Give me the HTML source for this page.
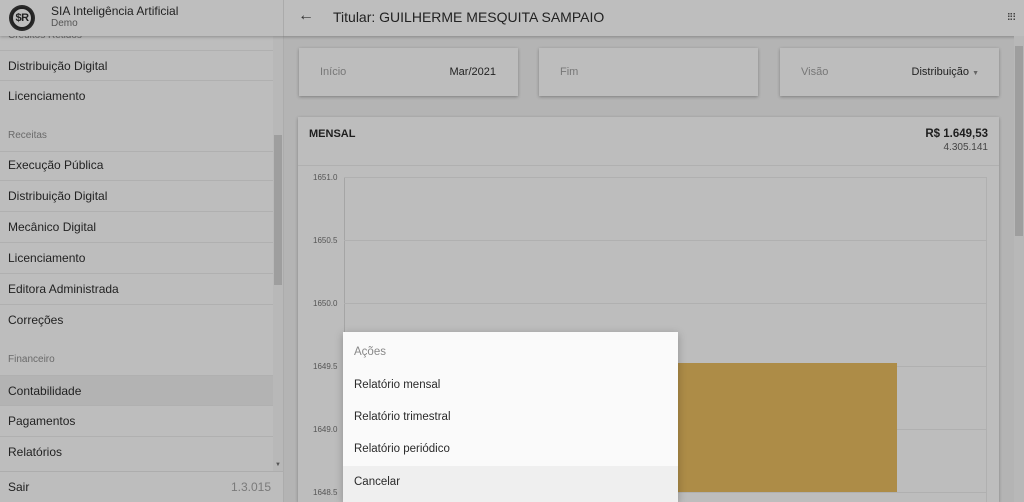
<!DOCTYPE html>
<html style="overflow:hidden;width:1024px;height:502px"><head><meta charset="utf-8"><style>
*{box-sizing:border-box;margin:0;padding:0}
body{width:1024px;height:502px;overflow:hidden;background:#b4b4b4;font-family:"Liberation Sans",sans-serif;position:relative;color:#1e1e1e}
.abs{position:absolute}
.sb{left:0;top:0;width:284px;height:502px;background:#bdbdbd;border-right:1px solid #acacac}
.item{position:absolute;left:0;width:273px;font-size:12px;color:#222;padding-left:8px;border-bottom:1px solid #b0b0b0;height:31px;line-height:30px}
.lbl{position:absolute;left:8px;font-size:10px;color:#6a6a6a}
.hdr{left:0;top:0;width:1024px;height:36px;background:#bebebe;box-shadow:0 1px 3px rgba(0,0,0,.25)}
.card{background:#bdbdbd;box-shadow:0 1px 3px rgba(0,0,0,.3);position:absolute}
.yl{position:absolute;left:313px;font-size:8px;color:#555}
.gl{position:absolute;left:344px;width:643px;height:1px;background:#b0b0b0}
.mi{position:absolute;left:343px;width:335px;height:32px;line-height:32px;padding-left:11px;font-size:11.5px;color:#2a2a2a}
</style></head><body>
<div class="abs sb">
  <div class="lbl" style="top:30px;">Créditos Retidos</div>
  <div class="item" style="top:19px;height:32px"></div>
  <div class="item" style="top:50px;border-top:1px solid #b0b0b0">Distribuição Digital</div>
  <div class="item" style="top:81px;border-bottom:none">Licenciamento</div>
  <div class="lbl" style="top:130px;">Receitas</div>
  <div class="item" style="top:151px;border-top:1px solid #b0b0b0;height:30px;padding:0"></div>
  <div class="item" style="top:150px">Execução Pública</div>
  <div class="item" style="top:181px">Distribuição Digital</div>
  <div class="item" style="top:212px">Mecânico Digital</div>
  <div class="item" style="top:243px">Licenciamento</div>
  <div class="item" style="top:274px">Editora Administrada</div>
  <div class="item" style="top:305px;border-bottom:none">Correções</div>
  <div class="lbl" style="top:354px;">Financeiro</div>
  <div class="item" style="top:375px;background:#b3b3b3;border-top:1px solid #b0b0b0">Contabilidade</div>
  <div class="item" style="top:406px">Pagamentos</div>
  <div class="item" style="top:437px;border-bottom:none">Relatórios</div>
  <div class="abs" style="left:273px;top:36px;width:10px;height:435px;background:#b8b8b8"></div>
  <div class="abs" style="left:274px;top:135px;width:8px;height:150px;background:#9e9e9e"></div>
  <div class="abs" style="left:275px;top:462px;font-size:6px;color:#555">▼</div>
  <div class="abs" style="left:0;top:471px;width:284px;height:31px;border-top:1px solid #adadad;font-size:12px;line-height:30px;padding:0 13px 0 8px;display:flex;justify-content:space-between"><span>Sair</span><span style="color:#7a7a7a">1.3.015</span></div>
</div>
<div class="abs hdr">
  <div class="abs" style="left:0;top:0;width:284px;height:36px;border-right:1px solid #ababab"></div>
  <div class="abs" style="left:9px;top:5px;width:26px;height:26px;border-radius:50%;background:#2a2a2a;"></div>
  <div class="abs" style="left:11px;top:7px;width:22px;height:22px;border-radius:50%;background:#bebebe;border:2px solid #222"></div>
  <div class="abs" style="left:9px;top:5px;width:26px;height:26px;font-weight:bold;font-size:11px;line-height:26px;text-align:center;color:#222;letter-spacing:-0.5px">$R</div>
  <div class="abs" style="left:51px;top:4px;font-size:12px;color:#222">SIA Inteligência Artificial</div>
  <div class="abs" style="left:51px;top:18px;font-size:10px;color:#555">Demo</div>
  <div class="abs" style="left:298px;top:7px;font-size:16px;color:#333">←</div>
  <div class="abs" style="left:333px;top:9px;font-size:14px;color:#222">Titular: GUILHERME MESQUITA SAMPAIO</div>
  <div class="abs" style="left:1008px;top:13px;width:7px;height:7px;background:repeating-linear-gradient(90deg,#444 0 1.5px,transparent 1.5px 2.75px);-webkit-mask:repeating-linear-gradient(0deg,#000 0 1.5px,transparent 1.5px 2.75px)"></div>
</div>
<div class="abs" style="left:1014px;top:36px;width:10px;height:466px;background:#b8b8b8"></div>
<div class="abs" style="left:1015px;top:46px;width:8px;height:190px;background:#9e9e9e"></div>
<div class="card" style="left:299px;top:48px;width:219px;height:48px"><span class="abs" style="left:21px;top:18px;font-size:11px;color:#777">Início</span><span class="abs" style="right:22px;top:18px;font-size:11px;color:#222">Mar/2021</span></div>
<div class="card" style="left:539px;top:48px;width:219px;height:48px"><span class="abs" style="left:21px;top:18px;font-size:11px;color:#777">Fim</span></div>
<div class="card" style="left:780px;top:48px;width:219px;height:48px"><span class="abs" style="left:21px;top:18px;font-size:11px;color:#777">Visão</span><span class="abs" style="right:20px;top:18px;font-size:11px;color:#222">Distribuição <span style="font-size:7px;color:#666">▼</span></span></div>
<div class="card" style="left:298px;top:117px;width:701px;height:385px">
  <div class="abs" style="left:11px;top:11px;font-size:11px;font-weight:bold">MENSAL</div>
  <div class="abs" style="right:11px;top:11px;font-size:11.5px;font-weight:bold">R$ 1.649,53</div>
  <div class="abs" style="right:11px;top:25px;font-size:10px;color:#444">4.305.141</div>
  <div class="abs" style="left:0;top:48px;width:701px;height:1px;background:#b0b0b0"></div>
</div>
<div class="abs" style="left:986px;top:177px;width:1px;height:325px;background:#b0b0b0"></div>
<div class="abs" style="left:344px;top:177px;width:1px;height:325px;background:#a5a5a5"></div>
<div class="gl" style="top:177px"></div><div class="gl" style="top:240px"></div><div class="gl" style="top:303px"></div><div class="gl" style="top:366px"></div><div class="gl" style="top:429px"></div><div class="gl" style="top:492px"></div>
<div class="yl" style="top:173px">1651.0</div><div class="yl" style="top:236px">1650.5</div><div class="yl" style="top:299px">1650.0</div><div class="yl" style="top:362px">1649.5</div><div class="yl" style="top:425px">1649.0</div><div class="yl" style="top:488px">1648.5</div>
<div class="abs" style="left:678px;top:363px;width:219px;height:129px;background:#ad8c47"></div>
<div class="abs" style="left:343px;top:332px;width:335px;height:170px;background:#fafafa;box-shadow:0 2px 8px rgba(0,0,0,.25)"></div>
<div class="mi" style="top:336px;color:#888">Ações</div>
<div class="mi" style="top:369px">Relatório mensal</div>
<div class="mi" style="top:401px">Relatório trimestral</div>
<div class="mi" style="top:433px">Relatório periódico</div>
<div class="mi" style="top:466px;height:36px;line-height:32px;background:#efefef">Cancelar</div>
</body></html>
